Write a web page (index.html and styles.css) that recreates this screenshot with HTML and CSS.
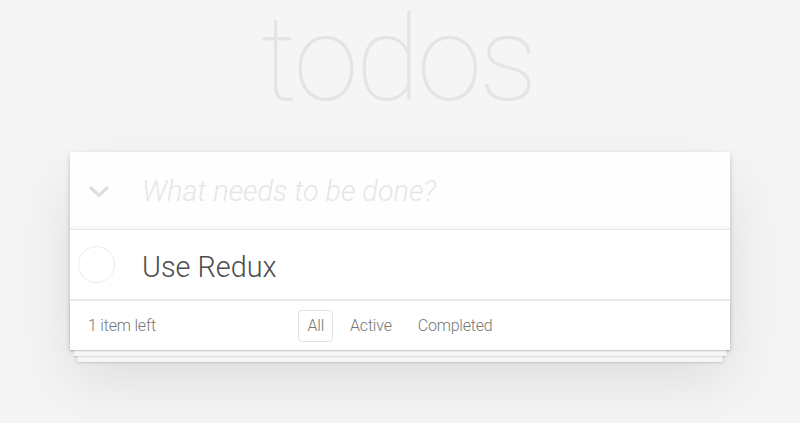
FILE: index.html
```html
<!DOCTYPE html>
<html lang="en">
<head>
<meta charset="utf-8">
<title>Redux TodoMVC</title>
<link rel="stylesheet" href="styles.css">
</head>
<body>
<div class="page">
  <h1 class="title">todos</h1>
  <section class="todoapp">
    <header class="header">
      <span class="toggle-all">
        <svg width="20" height="12" viewBox="0 0 20 12"><polyline points="2,2 10,9.5 18,2" fill="none" stroke="#dedede" stroke-width="3.2" stroke-linecap="round" stroke-linejoin="round"/></svg>
      </span>
      <input class="new-todo" type="text" placeholder="What needs to be done?">
    </header>
    <ul class="todo-list">
      <li class="todo">
        <span class="check"></span>
        <label class="todo-label">Use Redux</label>
      </li>
    </ul>
    <footer class="footer">
      <span class="count">1 item left</span>
      <ul class="filters">
        <li><a class="filter selected">All</a></li>
        <li><a class="filter">Active</a></li>
        <li><a class="filter">Completed</a></li>
      </ul>
      <span></span>
    </footer>
  </section>
</div>
</body>
</html>
```
FILE: styles.css
```css
* { box-sizing: border-box; }
html, body { margin: 0; padding: 0; min-height: 100%; }
html { background: #f5f5f5; height: 100%; }
body {
  background: #f5f5f5;
  color: #4d4d4d;
  font-family: Roboto, "Liberation Sans", Arial, sans-serif;
  font-weight: 300;
  font-size: 16.8px;
  line-height: 1.4em;
}
.page {
  width: 660px;
  margin: 0 auto;
  padding-bottom: 72px;
}
.title {
  margin: 0 0 32px 0;
  padding: 0 5px 0 0;
  height: 120px;
  font-size: 118px;
  line-height: 120px;
  font-weight: 100;
  letter-spacing: -3px;
  text-align: center;
  color: #e5e3e3;
}
.todoapp {
  position: relative;
  background: #fff;
  box-shadow: 0 2.4px 4.8px 0 rgba(0,0,0,0.2), 0 30px 60px 0 rgba(0,0,0,0.1);
}
.header {
  display: flex;
  align-items: center;
  height: 77px;
  background: rgba(0,0,0,0.003);
  box-shadow: inset 0 -2.4px 1.2px rgba(0,0,0,0.03);
}
.toggle-all {
  display: flex;
  align-items: center;
  width: 72px;
  padding-left: 19px;
  padding-top: 2px;
}
.toggle-all svg { display: block; }
.new-todo {
  flex: 1;
  border: none;
  outline: none;
  background: transparent;
  padding: 0;
  margin: 0;
  font-family: inherit;
  font-size: 28.8px;
  font-weight: 300;
  color: #4d4d4d;
}
.new-todo::placeholder {
  font-style: italic;
  font-weight: 300;
  color: #e6e6e6;
}
.todo-list {
  list-style: none;
  margin: 0;
  padding: 0;
  border-top: 1px solid #e6e6e6;
}
.todo {
  display: flex;
  align-items: center;
  height: 70px;
  border-bottom: 1px solid #ededed;
}
.check {
  width: 37px;
  height: 37px;
  margin-left: 8px;
  margin-right: 27px;
  border: 1px solid #ececec;
  border-radius: 50%;
}
.todo-label {
  font-size: 28.8px;
  line-height: 1.2;
  padding-top: 6px;
  color: #4d4d4d;
}
.footer {
  position: relative;
  display: grid;
  grid-template-columns: 1fr auto 1fr;
  align-items: center;
  height: 50px;
  padding: 0 18px;
  color: #777;
  font-size: 16px;
  letter-spacing: -0.2px;
  border-top: 1px solid #e6e6e6;
}
.footer::before {
  content: '';
  position: absolute;
  right: 0;
  bottom: 0;
  left: 0;
  height: 50px;
  overflow: hidden;
  box-shadow: 0 1.2px 1.2px rgba(0,0,0,0.2),
    0 9.6px 0 -3.6px #f6f6f6,
    0 10.8px 1.2px -3.6px rgba(0,0,0,0.2),
    0 19.2px 0 -7.2px #f6f6f6,
    0 20.4px 2.4px -7.2px rgba(0,0,0,0.2);
}
.count { position: relative; padding-top: 1px; }
.filters {
  position: relative;
  display: flex;
  list-style: none;
  margin: 0;
  padding: 0;
  padding-top: 1px;
}
.filter {
  display: block;
  margin: 0 3.6px;
  padding: 3.6px 8.4px;
  border: 1.2px solid transparent;
  border-radius: 3.6px;
  color: inherit;
  text-decoration: none;
}
.filter.selected { border-color: #e3e0e0; }
```
